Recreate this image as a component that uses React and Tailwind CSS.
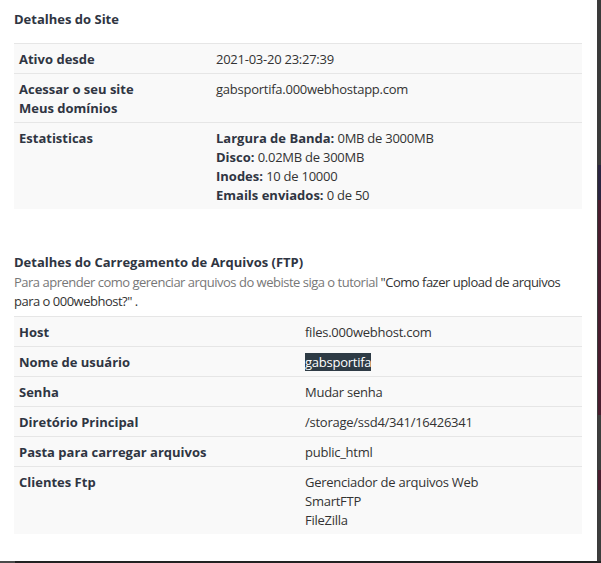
import React from 'react';

const siteRows = [
    { label: 'Ativo desde', value: ['2021-03-20 23:27:39'] },
    { label: ['Acessar o seu site', 'Meus domínios'], value: ['gabsportifa.000webhostapp.com'] },
];

const stats = [
    ['Largura de Banda:', '0MB de 3000MB'],
    ['Disco:', '0.02MB de 300MB'],
    ['Inodes:', '10 de 10000'],
    ['Emails enviados:', '0 de 50'],
];

const ftpRows = [
    { label: 'Host', value: ['files.000webhost.com'] },
    { label: 'Nome de usuário', value: ['gabsportifa'], selected: true },
    { label: 'Senha', value: ['Mudar senha'] },
    { label: 'Diretório Principal', value: ['/storage/ssd4/341/16426341'] },
    { label: 'Pasta para carregar arquivos', value: ['public_html'] },
    { label: 'Clientes Ftp', value: ['Gerenciador de arquivos Web', 'SmartFTP', 'FileZilla'] },
];

const Row = ({ label, children, labelWidth }) => (
    <div className="flex border-t border-[#e6e6e6] bg-[#f9f9f9]">
        <div className={`${labelWidth} shrink-0 px-[5px] pt-[6px] pb-[4px] font-bold text-[#2f3542]`}>
            {Array.isArray(label) ? label.map((l) => <div key={l}>{l}</div>) : label}
        </div>
        <div className="flex-1 px-[5px] pt-[6px] pb-[4px] tracking-[-0.25px] text-[#333]">{children}</div>
    </div>
);

export default function App() {
    return (
        <div className="flex h-[563px] w-[601px] flex-col overflow-hidden bg-[#2a2a2a]">
            <div className="flex flex-1">
                <div className="w-[597px] bg-white px-[14px] pt-[10px] text-[13px] leading-[19px] [font-family:'Open_Sans',sans-serif]">
                    {/* Detalhes do site */}
                    <h3 className="mb-[14px] font-bold text-[#2f3542]">Detalhes do Site</h3>
                    <div className="w-[568px]">
                        {siteRows.map((r, i) => (
                            <Row key={i} label={r.label} labelWidth="w-[197px]">
                                {r.value.map((v) => <div key={v}>{v}</div>)}
                            </Row>
                        ))}
                        <Row label="Estatisticas" labelWidth="w-[197px]">
                            {stats.map(([k, v]) => (
                                <div key={k}>
                                    <span className="font-bold tracking-normal text-[#2f3542]">{k}</span> {v}
                                </div>
                            ))}
                        </Row>
                    </div>

                    {/* FTP */}
                    <h3 className="mt-[44px] font-bold text-[#2f3542]">Detalhes do Carregamento de Arquivos (FTP)</h3>
                    <div className="mt-[1px] mb-[5px] tracking-[-0.5px] text-[#777]">
                        <div className="whitespace-nowrap">
                            Para aprender como gerenciar arquivos do webiste siga o tutorial{' '}
                            <span className="text-[#333]">"Como fazer upload de arquivos</span>
                        </div>
                        <div className="text-[#333]">para o 000webhost?" .</div>
                    </div>
                    <div className="w-[568px]">
                        {ftpRows.map((r) => (
                            <Row key={r.label} label={r.label} labelWidth="w-[286px]">
                                {r.value.map((v) => (
                                    <div key={v}>
                                        {r.selected ? <span className="bg-[#2e3b45] text-white">{v}</span> : v}
                                    </div>
                                ))}
                            </Row>
                        ))}
                    </div>
                </div>
                <div className="w-[1px] bg-[#3b3b3b]" />
                <div className="flex w-[3px] flex-col">
                    <div className="h-[165px] bg-[#3a3a3a]" />
                    <div className="h-[35px] bg-[#2b2541]" />
                    <div className="h-[215px] bg-[#4a1d2f]" />
                    <div className="h-[55px] bg-[#3d3d3d]" />
                    <div className="h-[20px] bg-[#4a1d2f]" />
                    <div className="flex-1 bg-[#3d3d3d]" />
                </div>
            </div>
            <div className="flex h-[2px]">
                <div className="w-[15px] bg-[#4a4a4a]" />
                <div className="flex-1 bg-[#222]" />
            </div>
        </div>
    );
}
